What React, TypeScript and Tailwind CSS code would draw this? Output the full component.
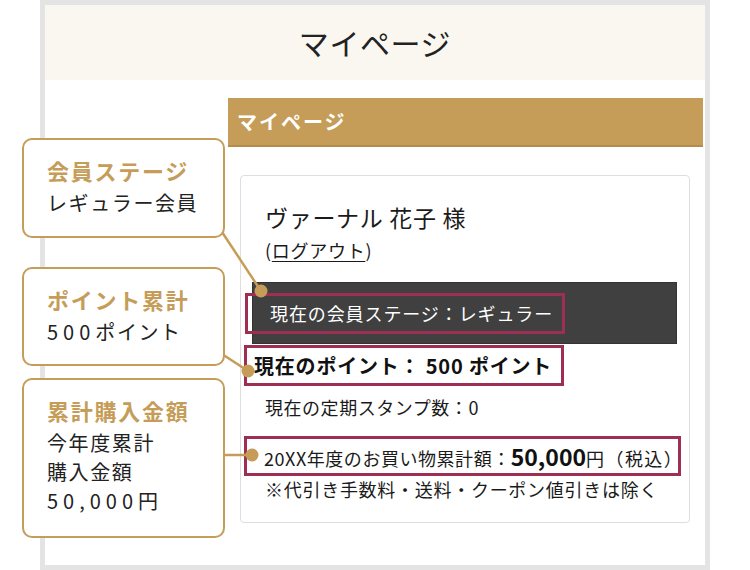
const font = "font-['Noto_Sans_CJK_JP','Noto_Sans',sans-serif]"

function Callout({ top, height, title, lines }: { top: number; height: number; title: string; lines: React.ReactNode[] }) {
    return (
        <div
            className="absolute left-[22px] flex w-[203px] flex-col rounded-[10px] border-2 border-[#c59d58] bg-white pl-[23px] pt-[12px]"
            style={{ top, height }}
        >
            <div className="text-[22px] font-bold leading-[36px] tracking-[0.08em] text-[#c59d58]">{title}</div>
            {lines.map((l, i) => (
                <div key={i} className="text-[20px] leading-[29px] tracking-[0.08em] text-[#222]">{l}</div>
            ))}
        </div>
    )
}

const num = (s: string) => <span className="tracking-[0.25em]">{s}</span>

export default function App() {
    return (
        <div className={`relative h-[570px] w-[750px] overflow-hidden bg-white ${font}`}>
            {/* page frame */}
            <div className="mx-[40px] flex h-full flex-col border-[5px] border-[#e4e4e4]">
                <div className="flex h-[75px] shrink-0 items-center justify-center bg-[#f9f7f0] text-[30px] tracking-[0.02em] text-[#222]">
                    マイページ
                </div>
                <div className="pl-[183px] pr-[2px] pt-[18px]">
                    <div className="flex h-[49px] items-center border-b-2 border-[#b58d4a] bg-[#c59d58] pl-[9px] text-[20px] font-bold tracking-[0.1em] text-white">
                        マイページ
                    </div>
                    <div className="pl-[12px] pr-[13px] pt-[28px]">
                        <div className="flex h-[348px] flex-col rounded-[4px] border border-[#dedede] bg-white pl-[11px] pr-[12px] pt-[25px] text-[#1a1a1a]">
                            <div className="pl-[13px] text-[23px] leading-[32px] tracking-[0.03em]">ヴァーナル 花子 様</div>
                            <div className="mt-[4px] pl-[13px] text-[18px] leading-[26px] tracking-[0.04em]">
                                (<span className="underline underline-offset-[3px]">ログアウト</span>)
                            </div>
                            <div className="mt-[19px] flex h-[62px] items-center border border-[#333] bg-[#404040]">
                                <div className="-ml-[8px] flex h-[41px] w-[320px] items-center border-[3px] border-[#9f2f52] pl-[22px] text-[18px] tracking-[0.05em] text-white">
                                    現在の会員ステージ：レギュラー
                                </div>
                            </div>
                            <div className="mt-px -ml-[8px] flex h-[41px] w-[320px] items-center whitespace-nowrap border-[3px] border-[#9f2f52] pl-[7px] text-[20px] font-bold tracking-[0.04em] text-[#111]">
                                現在のポイント： 500 ポイント
                            </div>
                            <div className="mt-[6px] pl-[13px] text-[18px] leading-[30px] tracking-[0.03em]">現在の定期スタンプ数：0</div>
                            <div className="mt-[14px] -ml-[8px] flex h-[40px] w-[437px] items-center border-[3px] border-[#9f2f52] pl-[17px]">
                                <div className="whitespace-nowrap text-[18px] tracking-[0.03em]">
                                    20XX年度のお買い物累計額：
                                    <span className="text-[23px] font-bold tracking-normal text-[#111]">50,000</span>
                                    <span className="tracking-[0.08em]">円（税込）</span>
                                </div>
                            </div>
                            <div className="pl-[13px] text-[18px] leading-[26px] tracking-[0.04em]">※代引き手数料・送料・クーポン値引きは除く</div>
                        </div>
                    </div>
                </div>
            </div>

            {/* connectors */}
            <svg className="absolute left-0 top-0" width="750" height="570">
                <g stroke="#c59d58" strokeWidth="2.5" fill="none">
                    <line x1="222" y1="232" x2="261" y2="291" />
                    <line x1="222" y1="354" x2="248" y2="371" />
                    <line x1="222" y1="455" x2="252" y2="455" />
                </g>
                <g fill="#c59d58">
                    <circle cx="261" cy="291" r="6.5" />
                    <circle cx="248" cy="371" r="6.5" />
                    <circle cx="252" cy="455" r="6.5" />
                </g>
            </svg>

            <Callout top={138} height={100} title="会員ステージ" lines={["レギュラー会員"]} />
            <Callout top={267} height={99} title="ポイント累計" lines={[<>{num("500")}ポイント</>]} />
            <Callout top={378} height={160} title="累計購入金額" lines={["今年度累計", "購入金額", <>{num("50,000")}円</>]} />
        </div>
    )
}
